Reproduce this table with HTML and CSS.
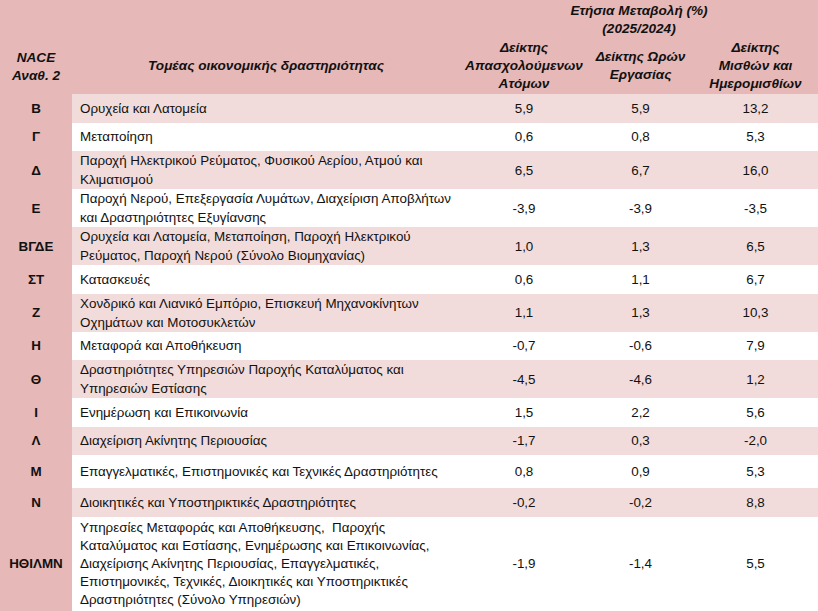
FILE: index.html
```html
<!DOCTYPE html>
<html lang="el">

<head>
    <meta charset="UTF-8">
    <meta name="viewport" content="width=device-width, initial-scale=1.0">
    <title>Ετήσια Μεταβολή (%)</title>
    <link rel="stylesheet" href="styles.css">
</head>

<body>
    <table class="stats">
        <colgroup>
            <col class="c-code">
            <col class="c-name">
            <col class="c-emp">
            <col class="c-hours">
            <col class="c-wages">
        </colgroup>
        <thead>
            <tr class="head-top">
                <th class="code"></th>
                <th></th>
                <th colspan="3">Ετήσια Μεταβολή (%)<br>(2025/2024)</th>
            </tr>
            <tr class="head-sub">
                <th class="code">NACE<br>Αναθ. 2</th>
                <th>Τομέας οικονομικής δραστηριότητας</th>
                <th>Δείκτης<br>Απασχολούμενων<br>Ατόμων</th>
                <th>Δείκτης Ωρών<br>Εργασίας</th>
                <th>Δείκτης<br>Μισθών και<br>Ημερομισθίων</th>
            </tr>
        </thead>
        <tbody>
            <tr class="alt">
                <td class="code">Β</td>
                <td class="name">Ορυχεία και Λατομεία</td>
                <td>5,9</td>
                <td>5,9</td>
                <td>13,2</td>
            </tr>
            <tr>
                <td class="code">Γ</td>
                <td class="name">Μεταποίηση</td>
                <td>0,6</td>
                <td>0,8</td>
                <td>5,3</td>
            </tr>
            <tr class="alt">
                <td class="code">Δ</td>
                <td class="name">Παροχή Ηλεκτρικού Ρεύματος, Φυσικού Αερίου, Ατμού και<br>Κλιματισμού</td>
                <td>6,5</td>
                <td>6,7</td>
                <td>16,0</td>
            </tr>
            <tr>
                <td class="code">Ε</td>
                <td class="name">Παροχή Νερού, Επεξεργασία Λυμάτων, Διαχείριση Αποβλήτων<br>και Δραστηριότητες Εξυγίανσης</td>
                <td>-3,9</td>
                <td>-3,9</td>
                <td>-3,5</td>
            </tr>
            <tr class="alt">
                <td class="code">ΒΓΔΕ</td>
                <td class="name">Ορυχεία και Λατομεία, Μεταποίηση, Παροχή Ηλεκτρικού<br>Ρεύματος, Παροχή Νερού (Σύνολο Βιομηχανίας)</td>
                <td>1,0</td>
                <td>1,3</td>
                <td>6,5</td>
            </tr>
            <tr>
                <td class="code">ΣΤ</td>
                <td class="name">Κατασκευές</td>
                <td>0,6</td>
                <td>1,1</td>
                <td>6,7</td>
            </tr>
            <tr class="alt">
                <td class="code">Ζ</td>
                <td class="name">Χονδρικό και Λιανικό Εμπόριο, Επισκευή Μηχανοκίνητων<br>Οχημάτων και Μοτοσυκλετών</td>
                <td>1,1</td>
                <td>1,3</td>
                <td>10,3</td>
            </tr>
            <tr>
                <td class="code">Η</td>
                <td class="name">Μεταφορά και Αποθήκευση</td>
                <td>-0,7</td>
                <td>-0,6</td>
                <td>7,9</td>
            </tr>
            <tr class="alt">
                <td class="code">Θ</td>
                <td class="name">Δραστηριότητες Υπηρεσιών Παροχής Καταλύματος και<br>Υπηρεσιών Εστίασης</td>
                <td>-4,5</td>
                <td>-4,6</td>
                <td>1,2</td>
            </tr>
            <tr>
                <td class="code">Ι</td>
                <td class="name">Ενημέρωση και Επικοινωνία</td>
                <td>1,5</td>
                <td>2,2</td>
                <td>5,6</td>
            </tr>
            <tr class="alt">
                <td class="code">Λ</td>
                <td class="name">Διαχείριση Ακίνητης Περιουσίας</td>
                <td>-1,7</td>
                <td>0,3</td>
                <td>-2,0</td>
            </tr>
            <tr class="tall">
                <td class="code">Μ</td>
                <td class="name">Επαγγελματικές, Επιστημονικές και Τεχνικές Δραστηριότητες</td>
                <td>0,8</td>
                <td>0,9</td>
                <td>5,3</td>
            </tr>
            <tr class="alt">
                <td class="code">Ν</td>
                <td class="name">Διοικητικές και Υποστηρικτικές Δραστηριότητες</td>
                <td>-0,2</td>
                <td>-0,2</td>
                <td>8,8</td>
            </tr>
            <tr class="total">
                <td class="code">ΗΘΙΛΜΝ</td>
                <td class="name">Υπηρεσίες Μεταφοράς και Αποθήκευσης,&nbsp; Παροχής<br>Καταλύματος και Εστίασης, Ενημέρωσης και Επικοινωνίας,<br>Διαχείρισης Ακίνητης Περιουσίας, Επαγγελματικές,<br>Επιστημονικές, Τεχνικές, Διοικητικές και Υποστηρικτικές<br>Δραστηριότητες (Σύνολο Υπηρεσιών)</td>
                <td>-1,9</td>
                <td>-1,4</td>
                <td>5,5</td>
            </tr>
        </tbody>
    </table>
</body>

</html>
```

FILE: styles.css
```css
* {
    margin: 0;
    padding: 0;
    box-sizing: border-box;
}

body {
    background-color: #fff;
    font-family: "Liberation Sans", Arial, sans-serif;
    font-size: 13.4px;
    color: #111;
}

.stats {
    width: 818px;
    table-layout: fixed;
    border-collapse: collapse;
}

.c-code {
    width: 72px;
}

.c-name {
    width: 388px;
}

.c-emp {
    width: 128px;
}

.c-hours {
    width: 105px;
}

.c-wages {
    width: 125px;
}

thead th {
    background-color: #e6b8b7;
    font-size: 13.6px;
    font-weight: bold;
    font-style: italic;
    text-align: center;
    vertical-align: middle;
    line-height: 18px;
    white-space: nowrap;
}

.head-top th {
    height: 38px;
    padding-top: 2px;
}

.head-sub th {
    height: 56px;
}

.head-sub th.code {
    padding-top: 2px;
}

tbody td {
    height: 28.5px;
    line-height: 19px;
    text-align: center;
    vertical-align: middle;
    white-space: nowrap;
}

tbody tr.tall td {
    height: 33px;
}

tbody tr.total td {
    line-height: 18px;
    padding: 2px 0;
}

tbody tr.total td.name {
    padding-left: 8px;
}

tbody tr.alt td {
    background-color: #f2dcdb;
}

tbody td.code,
tbody tr.alt td.code {
    background-color: #e6b8b7;
    font-weight: bold;
}

tbody td.name {
    text-align: left;
    padding-left: 8px;
}
```
